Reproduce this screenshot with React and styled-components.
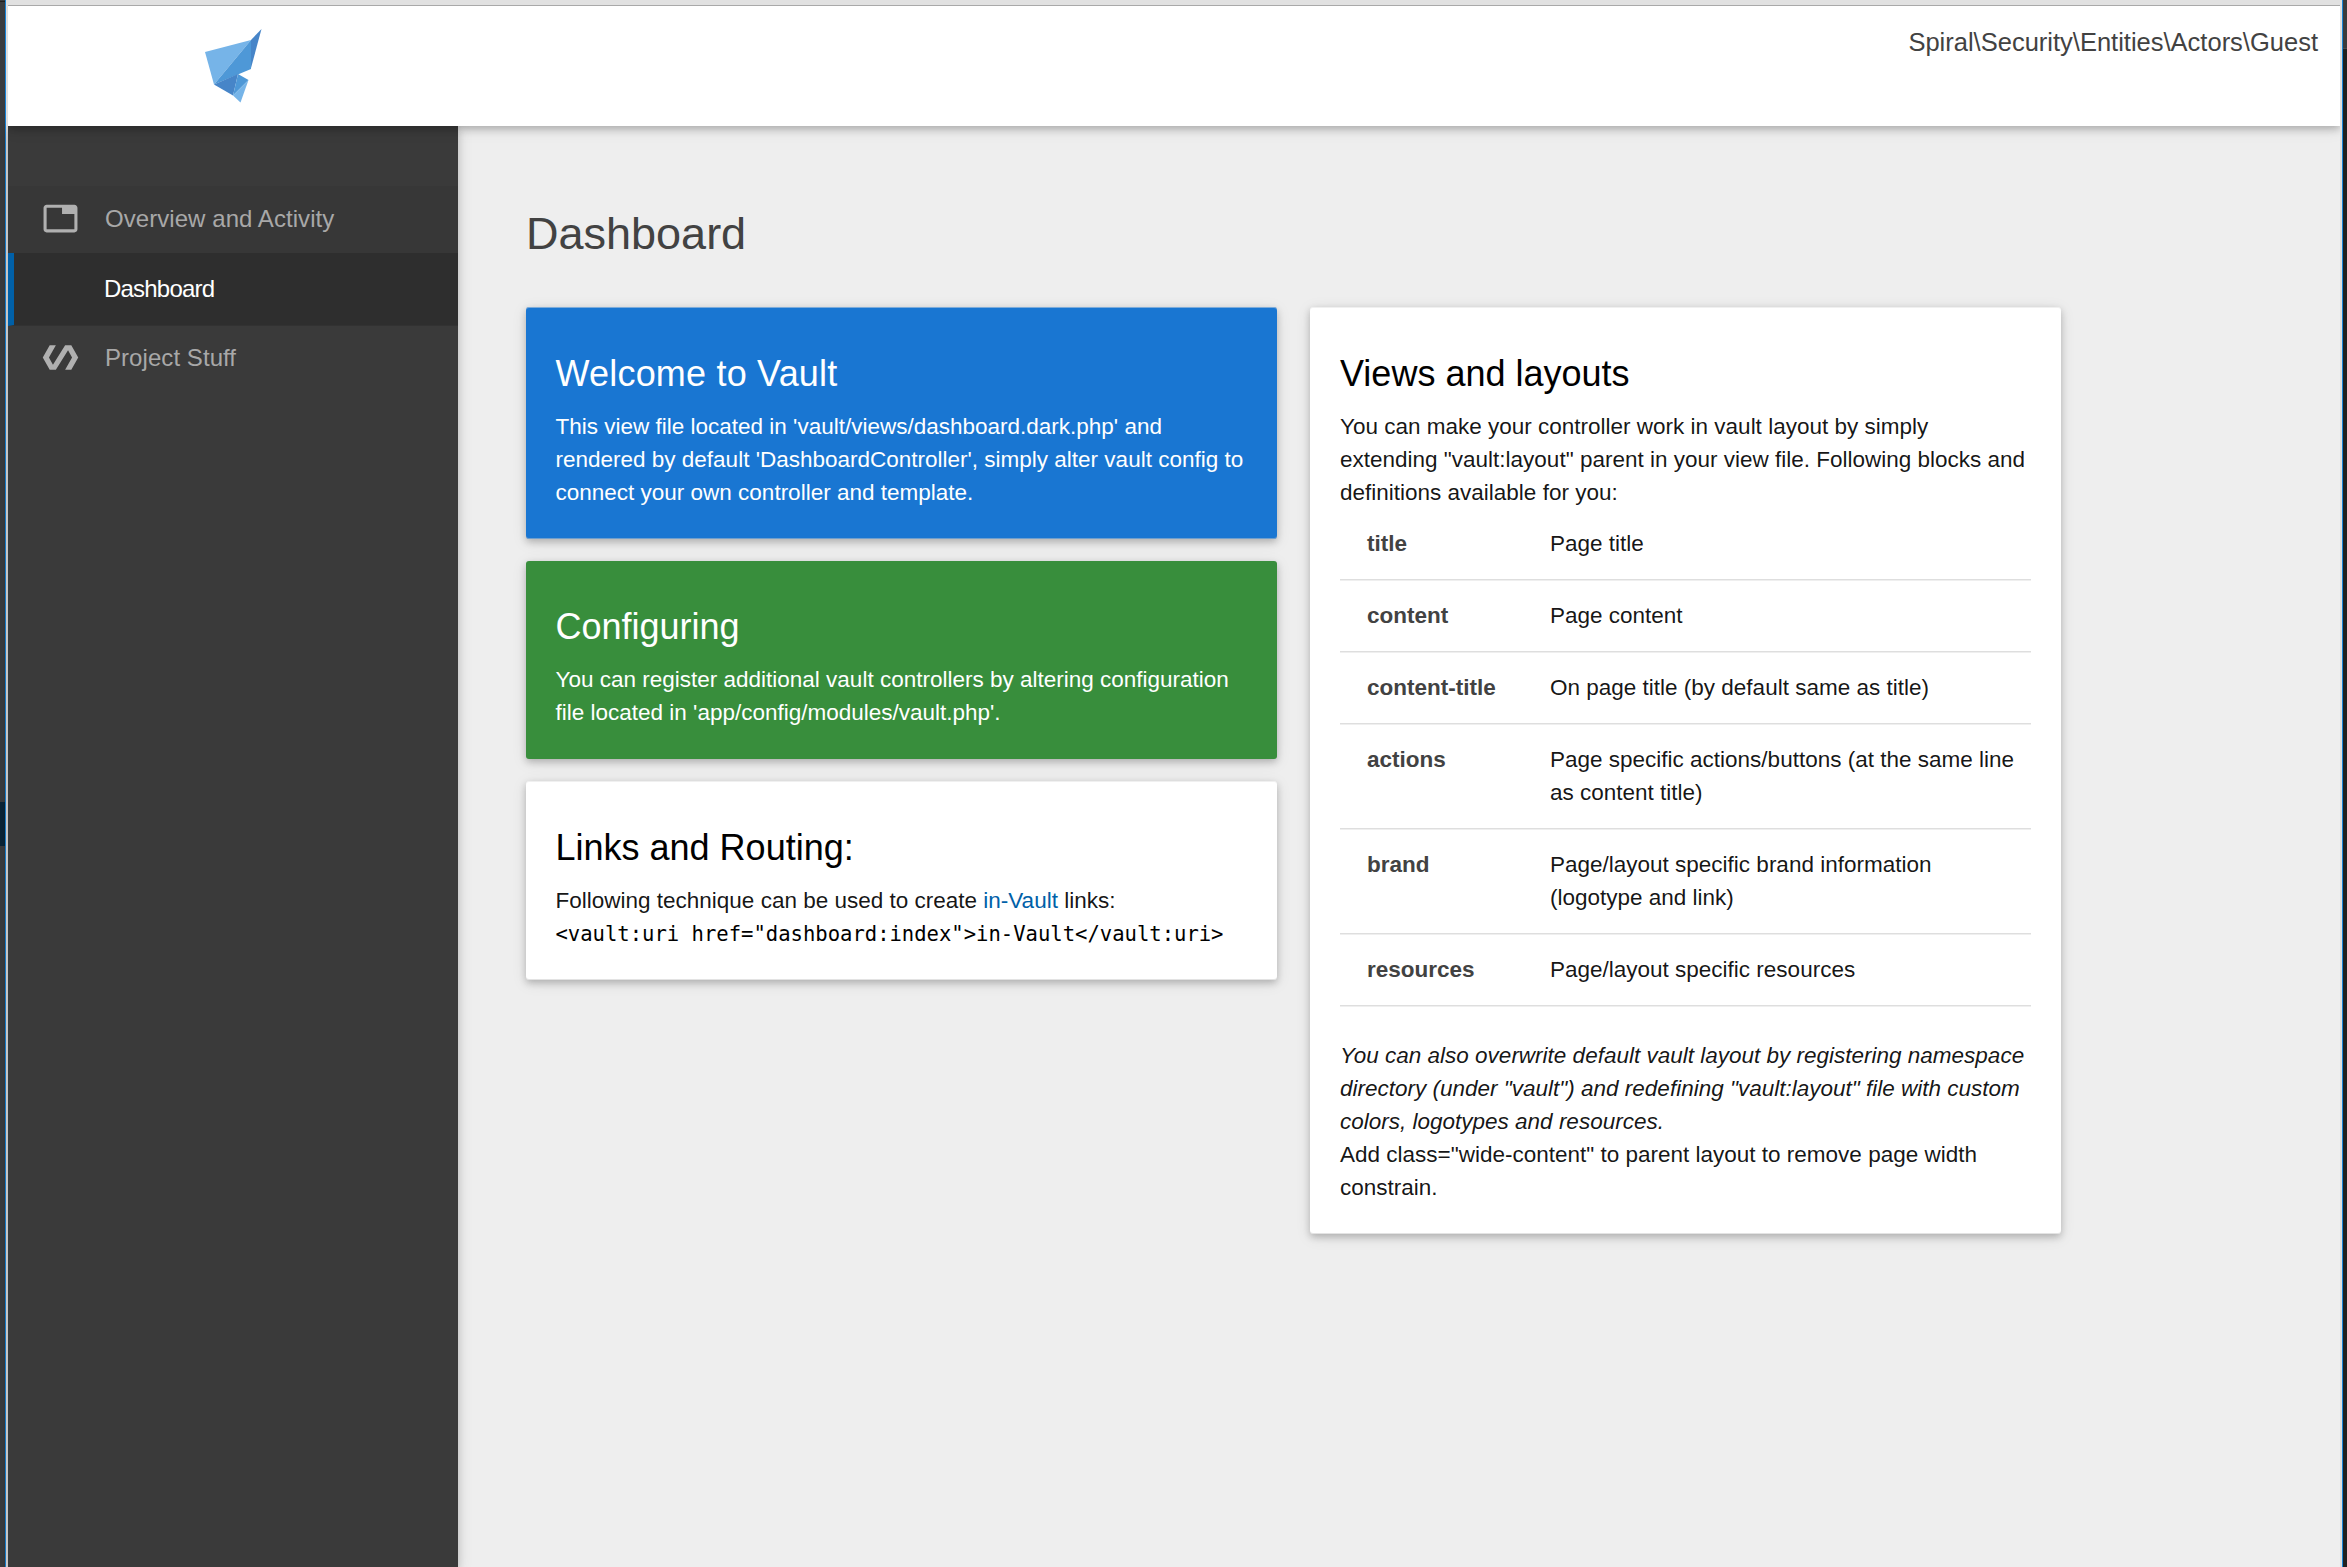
import React from 'react';
import styled, { createGlobalStyle } from 'styled-components';

const Global = createGlobalStyle`
  * { box-sizing: border-box; }
  html, body { margin: 0; padding: 0; background: #202020; }
  body {
    font-family: "Liberation Sans", Arial, sans-serif;
    font-size: 22.5px;
    line-height: 33px;
    color: rgba(0, 0, 0, 0.92);
    overflow: hidden;
  }
`;

const Desktop = styled.div`
  display: grid;
  grid-template-columns: 5px 1px 2px 2332px 2px 1px 4px;
  height: 1567px;
`;
const LeftBackdrop = styled.div`
  display: flex;
  flex-direction: column;
  justify-content: flex-start;
  padding-top: 802px;
  background: linear-gradient(#202020 1px, transparent 1px) 0 1px / 100% 100% no-repeat, #3a3c3f;
`;
const Marker = styled.div`
  height: 44px;
  background: #0b2538;
`;
const RightBackdrop = styled.div`
  background: linear-gradient(#3a3a3c 48px, #4a4a4c 48px, #4a4a4c 49px, #202020 49px);
`;
const WindowEdge = styled.div`
  background: #1883d7;
`;
const Frame = styled.div`
  background: #e0e0e0;
`;

const Page = styled.div`
  display: grid;
  grid-template-rows: 5px 121px 1441px;
  background: #eeeeee;
`;
const BrowserStrip = styled.div`
  background: #e1e1e1;
`;
const Header = styled.header`
  display: flex;
  justify-content: space-between;
  border-top: 1px solid #a9a9a9;
  background: #fff;
  box-shadow: 0 3px 7.5px rgba(0, 0, 0, 0.22), 0 3px 15px rgba(0, 0, 0, 0.1);
  clip-path: inset(0 0 -30px 0);
  z-index: 2;
`;
const Brand = styled.a`
  display: flex;
  justify-content: center;
  width: 450px;
  padding-top: 22px;
`;
const Actor = styled.div`
  padding: 18px 22px 0 0;
  font-size: 25.5px;
  line-height: 36px;
  color: #424242;
`;

const Body = styled.div`
  display: flex;
`;
const Sidebar = styled.nav`
  width: 450px;
  padding-top: 60px;
  background: #3a3a3a;
  box-shadow: 0 3px 7.5px rgba(0, 0, 0, 0.16), 0 3px 15px rgba(0, 0, 0, 0.12);
  font-size: 24px;
`;
const NavGroup = styled.a`
  display: flex;
  align-items: center;
  gap: 26px;
  height: ${(p) => (p.$open ? 67 : 64)}px;
  padding: 0 0 ${(p) => (p.$open ? 3 : 2)}px 34px;
  background: ${(p) => (p.$open ? '#373737' : 'transparent')};
  color: #a8a8a8;
  letter-spacing: 0.06px;

  svg { width: 37px; height: 37px; fill: #b0b0b0; flex: none; }
`;
const NavItem = styled.a`
  display: flex;
  align-items: center;
  height: 73px;
  padding: 0 0 2px 90px;
  border-left: 6px solid #0060a8;
  border-bottom: 1px solid #323232;
  background: #2e2e2e;
  color: #fff;
  letter-spacing: -0.8px;
`;

const Main = styled.main`
  padding: 82px 0 0 68px;
`;
const PageTitle = styled.h1`
  margin: 0 0 48px;
  font-size: 45px;
  line-height: 51px;
  font-weight: 400;
  color: #424242;
`;
const Columns = styled.div`
  display: grid;
  grid-template-columns: 751px 751px;
  align-items: start;
  gap: 33px;
`;
const Column = styled.div`
  display: grid;
  gap: 22px;
`;
const Card = styled.section`
  padding: ${(p) => (p.$tone === 'green' ? 30 : 31)}px 30px 30px ${(p) => (p.$wide ? 30 : 29.5)}px;
  border-radius: 3px;
  background: ${(p) => ({ blue: '#1976d2', green: '#388e3c' }[p.$tone] || '#fff')};
  color: ${(p) => (p.$tone ? '#fff' : 'inherit')};
  box-shadow: 0 3px 7.5px rgba(0, 0, 0, 0.2), 0 3px 15px rgba(0, 0, 0, 0.1)
    ${(p) => (p.$tone === 'green' ? '' : ', inset 0 1px rgba(225, 225, 225, 0.5), inset 0 -1px rgba(200, 200, 200, 0.5)')};
`;
const CardTitle = styled.h2`
  margin: 15px 0 16px;
  font-size: 36px;
  line-height: 41px;
  font-weight: 400;
  letter-spacing: ${(p) => p.$spacing || 0}px;
  color: ${(p) => (p.$light ? '#fff' : '#000')};
`;
const Text = styled.p`
  margin: 0;
  white-space: nowrap;
  font-style: ${(p) => (p.$italic ? 'italic' : 'normal')};
`;
const Link = styled.a`
  color: #0060a8;
`;
const Code = styled.code`
  font-family: "DejaVu Sans Mono", monospace;
  font-size: 20.55px;
  line-height: 1;
  color: #000;
`;
const Definitions = styled.dl`
  margin: 0 0 33px;
`;
const Definition = styled.div`
  display: grid;
  grid-template-columns: 183px 1fr;
  margin-bottom: 1px;
  padding: 18px 0 19px 27px;
  border-bottom: 1px solid #dedede;
  box-shadow: 0 1px #efefef;
`;
const Term = styled.dt`
  font-weight: 700;
  color: #424242;
`;
const Meaning = styled.dd`
  margin: 0;
  white-space: nowrap;
`;

const Logo = () => (
  <svg width="60" height="78" viewBox="0 0 60 78">
    <path d="M2 24 48 12 11 56.500Z" fill="#76b4e8" />
    <path d="M48 12V41L11 56.500Z" fill="#4e98d7" />
    <path d="M58.500 1 48 12V40Z" fill="#4785c8" />
    <path d="M11 56.500 35 46 30 67.500Z" fill="#4785c8" />
    <path d="M35 46 45.500 52 30 67.500Z" fill="#4e98d7" />
    <path d="M45.500 52 37.500 74.500 30 67.500Z" fill="#76b4e8" />
  </svg>
);
const TabIcon = () => (
  <svg viewBox="0 0 24 24">
    <path d="M21 3H3c-1.100 0-2 .9-2 2v14c0 1.100.9 2 2 2h18c1.100 0 2-.9 2-2V5c0-1.100-.9-2-2-2zm0 16H3V5h10v4h8v10z" />
  </svg>
);
const PolymerIcon = () => (
  <svg viewBox="0 0 24 24">
    <path d="M19 4h-4L7.110 16.630 4.500 12 9 4H5L.5 12 5 20h4l7.890-12.630L19.500 12 15 20h4l4.500-8z" />
  </svg>
);

const definitions = [
  ['title', ['Page title']],
  ['content', ['Page content']],
  ['content-title', ['On page title (by default same as title)']],
  ['actions', ['Page specific actions/buttons (at the same line', 'as content title)']],
  ['brand', ['Page/layout specific brand information', '(logotype and link)']],
  ['resources', ['Page/layout specific resources']],
];

const lines = (items) =>
  items.map((t, i) => (
    <React.Fragment key={t}>
      {i > 0 && <br />}
      {t}
    </React.Fragment>
  ));

export default function App() {
  return (
    <>
      <Global />
      <Desktop>
        <LeftBackdrop><Marker /></LeftBackdrop>
        <WindowEdge />
        <Frame />
        <Page>
          <BrowserStrip />
          <Header>
            <Brand><Logo /></Brand>
            <Actor>{'Spiral\\Security\\Entities\\Actors\\Guest'}</Actor>
          </Header>
          <Body>
            <Sidebar>
              <NavGroup $open><TabIcon />Overview and Activity</NavGroup>
              <NavItem>Dashboard</NavItem>
              <NavGroup><PolymerIcon />Project Stuff</NavGroup>
            </Sidebar>
            <Main>
              <PageTitle>Dashboard</PageTitle>
              <Columns>
                <Column>
                  <Card $tone="blue">
                    <CardTitle $light $spacing={0.2}>Welcome to Vault</CardTitle>
                    <Text>
                      {lines([
                        "This view file located in 'vault/views/dashboard.dark.php' and",
                        "rendered by default 'DashboardController', simply alter vault config to",
                        'connect your own controller and template.',
                      ])}
                    </Text>
                  </Card>
                  <Card $tone="green">
                    <CardTitle $light>Configuring</CardTitle>
                    <Text>
                      {lines([
                        'You can register additional vault controllers by altering configuration',
                        "file located in 'app/config/modules/vault.php'.",
                      ])}
                    </Text>
                  </Card>
                  <Card>
                    <CardTitle>Links and Routing:</CardTitle>
                    <Text>
                      Following technique can be used to create <Link>in-Vault</Link> links:
                      <br />
                      <Code>{'<vault:uri href="dashboard:index">in-Vault</vault:uri>'}</Code>
                    </Text>
                  </Card>
                </Column>
                <Card $wide>
                  <CardTitle>Views and layouts</CardTitle>
                  <Text>
                    {lines([
                      'You can make your controller work in vault layout by simply',
                      'extending "vault:layout" parent in your view file. Following blocks and',
                      'definitions available for you:',
                    ])}
                  </Text>
                  <Definitions>
                    {definitions.map(([term, meaning]) => (
                      <Definition key={term}>
                        <Term>{term}</Term>
                        <Meaning>{lines(meaning)}</Meaning>
                      </Definition>
                    ))}
                  </Definitions>
                  <Text $italic>
                    {lines([
                      'You can also overwrite default vault layout by registering namespace',
                      'directory (under "vault") and redefining "vault:layout" file with custom',
                      'colors, logotypes and resources.',
                    ])}
                  </Text>
                  <Text>
                    {lines([
                      'Add class="wide-content" to parent layout to remove page width',
                      'constrain.',
                    ])}
                  </Text>
                </Card>
              </Columns>
            </Main>
          </Body>
        </Page>
        <Frame />
        <WindowEdge />
        <RightBackdrop />
      </Desktop>
    </>
  );
}
